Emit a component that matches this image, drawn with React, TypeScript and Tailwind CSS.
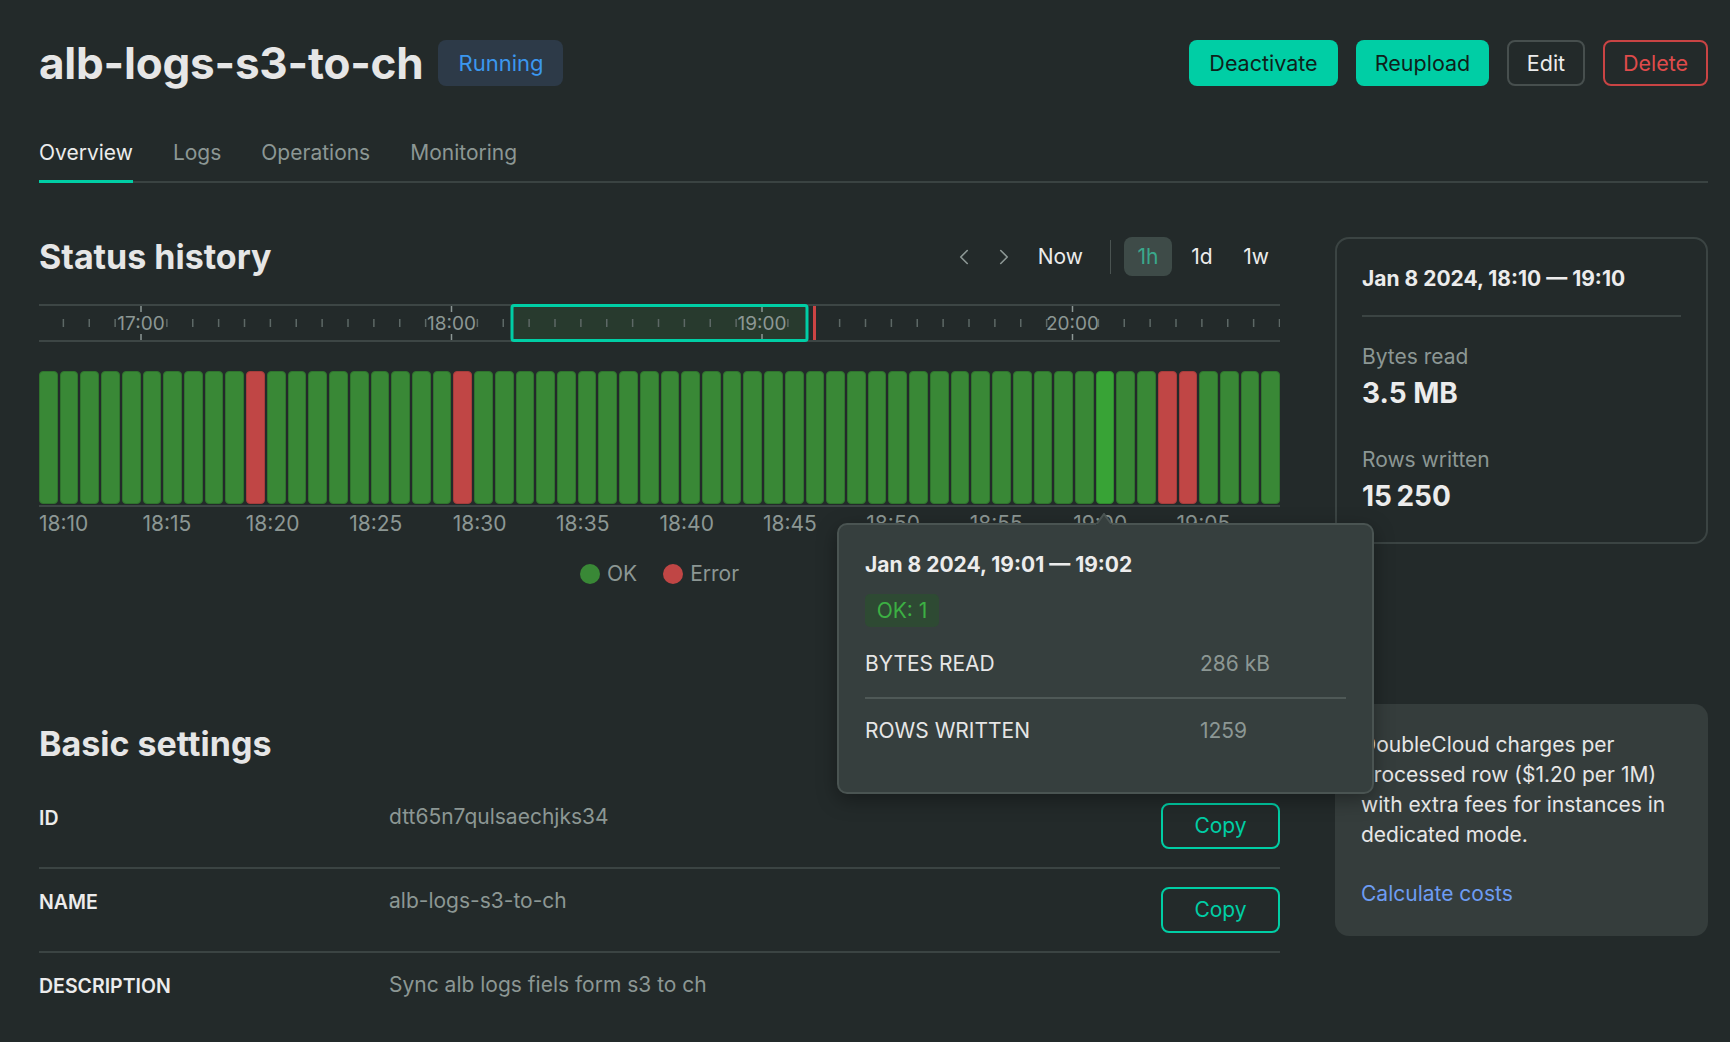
import { ChevronLeft, ChevronRight } from 'lucide-react';

const FONT = { fontFamily: 'Inter, "Noto Sans", sans-serif' };

type BarKind = 'ok' | 'error' | 'hover';

const bars: BarKind[] = Array.from({ length: 60 }, (_, i) => {
  if (i === 10 || i === 20 || i === 54 || i === 55) return 'error';
  if (i === 51) return 'hover';
  return 'ok';
});

const axisLabels = ['18:10', '18:15', '18:20', '18:25', '18:30', '18:35', '18:40', '18:45', '18:50', '18:55', '19:00', '19:05'];

const HOUR = 310.5;
const FIRST_HOUR_X = 102;

function Navigator() {
  const step = HOUR / 12;
  const ticks: { x: number; major: boolean; label?: string }[] = [];
  for (let k = -3; k < 48; k++) {
    const x = FIRST_HOUR_X + k * step;
    if (x < 0 || x > 1241) continue;
    const major = k % 12 === 0;
    ticks.push({ x, major, label: major ? `${17 + k / 12}:00` : undefined });
  }

  return (
    <svg width={1241} height={38} className="block">
      <rect x={473} y={1.5} width={295} height={35} rx={2} fill="#283a2e" />
      <line x1={0} y1={1} x2={1241} y2={1} stroke="#3d4645" strokeWidth={2} />
      <line x1={0} y1={37} x2={1241} y2={37} stroke="#3d4645" strokeWidth={2} />
      {ticks.map((t) =>
        t.major ? (
          <g key={t.x}>
            <line x1={t.x} y1={2} x2={t.x} y2={8} stroke="#8c9794" strokeWidth={1.5} />
            <line x1={t.x} y1={30} x2={t.x} y2={36} stroke="#8c9794" strokeWidth={1.5} />
            <text x={t.x} y={25.5} textAnchor="middle" fontSize={19} fill="#8c9794" style={FONT}>
              {t.label}
            </text>
          </g>
        ) : (
          <line key={t.x} x1={t.x} y1={15} x2={t.x} y2={23} stroke="#5d6866" strokeWidth={1.5} />
        ),
      )}
      <rect x={473} y={1.5} width={295} height={35} rx={2} fill="none" stroke="#00cea5" strokeWidth={3} />
      <rect x={774} y={2} width={3} height={34} fill="#cc4444" />
    </svg>
  );
}

function SettingRow({ label, value, copy, last }: { label: string; value: string; copy?: boolean; last?: boolean }) {
  return (
    <div className={`flex items-start h-[84px] ${last ? '' : 'border-b-2 border-[#3b4443]'}`}>
      <div className="w-[350px] pt-[21px] text-[19.5px] leading-6 font-semibold text-[#ececec]">{label}</div>
      <div className="pt-[20px] text-[21px] leading-6 text-[#8c9794]">{value}</div>
      {copy && (
        <button className="ml-auto mt-[18px] w-[119px] h-[46px] rounded-lg border-2 border-[#00cea5] text-[21px] text-[#00cea5]">
          Copy
        </button>
      )}
    </div>
  );
}

export default function App() {
  return (
    <div className="relative h-[1042px] overflow-hidden bg-[#232a2a] text-[#e8e8e8]" style={FONT}>
      <div className="pl-[39px] pr-[22px] pt-10">
        {/* header */}
        <div className="flex items-center h-[46px]">
          <h1 className="text-[44px] leading-[46px] font-bold text-[#e6e6e6] tracking-[-0.2px]">alb-logs-s3-to-ch</h1>
          <span className="ml-[15px] h-[46px] px-[20px] flex items-center rounded-lg bg-[#2d3a48] text-[22px] text-[#3b97ef]">
            Running
          </span>
          <div className="ml-auto flex items-center gap-[18px]">
            <button className="h-[46px] w-[149px] rounded-lg bg-[#00cea5] text-[21.5px] text-[#0f1f1b]">Deactivate</button>
            <button className="h-[46px] w-[133px] rounded-lg bg-[#00cea5] text-[21.5px] text-[#0f1f1b]">Reupload</button>
            <button className="h-[46px] w-[78px] rounded-lg border-2 border-[#474f4e] text-[21.5px] text-[#ececec]">Edit</button>
            <button className="h-[46px] w-[105px] rounded-lg border-2 border-[#c94444] text-[21.5px] text-[#df4b4b]">Delete</button>
          </div>
        </div>

        {/* tabs */}
        <div className="mt-[53px] flex gap-10 border-b-2 border-[#3a4342] text-[21px] leading-7">
          <div className="pb-[13px] border-b-[3px] border-[#00cea5] -mb-[2px] text-[#ececec]">Overview</div>
          <div className="pb-[13px] text-[#8c9794]">Logs</div>
          <div className="pb-[13px] text-[#8c9794]">Operations</div>
          <div className="pb-[13px] text-[#8c9794]">Monitoring</div>
        </div>

        <div className="mt-[54px] grid grid-cols-[1241px_373px] gap-x-[55px]">
          {/* left column */}
          <div>
            <div className="flex items-center h-[39px]">
              <h2 className="text-[34px] leading-[38px] font-bold text-[#e6e6e6]">Status history</h2>
              <div className="ml-auto flex items-center">
                <ChevronLeft size={26} strokeWidth={1.5} className="text-[#8c9794]" />
                <ChevronRight size={26} strokeWidth={1.5} className="ml-[14px] text-[#8c9794]" />
                <span className="ml-[21px] text-[21px] text-[#ececec]">Now</span>
                <span className="ml-[27px] w-px h-[34px] bg-[#4a5351]" />
                <span className="ml-[13px] w-[48px] h-[39px] rounded-lg bg-[#3e4b48] flex items-center justify-center text-[21px] text-[#3aa88c]">
                  1h
                </span>
                <span className="ml-[6px] w-[48px] h-[39px] flex items-center justify-center text-[21px] text-[#ececec]">1d</span>
                <span className="ml-[6px] w-[48px] h-[39px] flex items-center justify-center text-[21px] text-[#ececec]">1w</span>
              </div>
            </div>

            <div className="mt-[28px]">
              <Navigator />
            </div>

            <div className="mt-[29px] flex gap-[2px] h-[133px]">
              {bars.map((b, i) => (
                <div
                  key={i}
                  className={`flex-1 rounded-[4px] border ${
                    b === 'error'
                      ? 'bg-[#c04645] border-[#a63c3b]'
                      : b === 'hover'
                        ? 'bg-[#38a336] border-[#2f8a2d]'
                        : 'bg-[#398836] border-[#2f732d]'
                  }`}
                />
              ))}
            </div>
            <div className="mt-[1px] h-[2px] bg-[#3d4645]" />

            <div className="mt-[5px] grid grid-cols-12 text-[21px] leading-6 text-[#8c9794]">
              {axisLabels.map((l) => (
                <span key={l}>{l}</span>
              ))}
            </div>

            <div className="mt-[26px] flex justify-center items-center h-6 text-[21px] text-[#8c9794]">
              <span className="w-5 h-5 rounded-full bg-[#398836]" />
              <span className="ml-[7px]">OK</span>
              <span className="ml-[26px] w-5 h-5 rounded-full bg-[#c04645]" />
              <span className="ml-[7px]">Error</span>
            </div>

            <h2 className="mt-[139px] text-[34px] leading-[38px] font-bold text-[#e6e6e6]">Basic settings</h2>
            <div className="mt-[22px]">
              <SettingRow label="ID" value="dtt65n7qulsaechjks34" copy />
              <SettingRow label="NAME" value="alb-logs-s3-to-ch" copy />
              <SettingRow label="DESCRIPTION" value="Sync alb logs fiels form s3 to ch" last />
            </div>
          </div>

          {/* right column */}
          <div>
            <div className="h-[307px] rounded-[14px] border-2 border-[#3b4443] px-[25px] pt-[28px]">
              <div className="text-[21px] leading-6 font-bold text-[#ececec]">Jan 8 2024, 18:10 — 19:10</div>
              <div className="mt-[24px] h-[2px] bg-[#3b4443]" />
              <div className="mt-[28px] text-[21px] leading-6 text-[#8c9794]">Bytes read</div>
              <div className="mt-[7px] text-[28px] leading-[34px] font-bold text-[#ececec]">3.5 MB</div>
              <div className="mt-[38px] text-[21px] leading-6 text-[#8c9794]">Rows written</div>
              <div className="mt-[7px] text-[28px] leading-[34px] font-bold text-[#ececec]">15{'\u202F'}250</div>
            </div>

            <div className="mt-[160px] rounded-[14px] bg-[#353d3c] px-[26px] pt-[26px] pb-[27px]">
              <p className="text-[21px] leading-[30px] text-[#e6e6e6]">
                DoubleCloud charges per processed row ($1.20 per 1M) with extra fees for instances in dedicated mode.
              </p>
              <div className="mt-[29px] text-[21px] leading-[30px] text-[#6d9cf2]">Calculate costs</div>
            </div>
          </div>
        </div>
      </div>

      {/* tooltip */}
      <div className="absolute left-[837px] top-[523px] w-[537px] h-[271px] rounded-[10px] border-2 border-[#4a5452] bg-[#363f3e] px-[26px] pt-[28px] shadow-[0_6px_20px_rgba(0,0,0,0.35)]">
        <svg width={16} height={12} className="absolute -top-[12px] left-[257px]">
          <path d="M0 12 L8 1 L16 12" fill="#363f3e" stroke="#4a5452" strokeWidth={2} />
          <rect x={0} y={11} width={16} height={2} fill="#363f3e" />
        </svg>
        <div className="text-[21px] leading-6 font-bold text-[#ececec]">Jan 8 2024, 19:01 — 19:02</div>
        <div className="mt-[17px] w-[74px] h-[33px] rounded-[5px] bg-[#2e4a33] flex items-center justify-center text-[21px] text-[#3cb043]">
          OK: 1
        </div>
        <div className="mt-[25px] flex text-[21px] leading-6">
          <span className="w-[335px] text-[#e6e6e6]">BYTES READ</span>
          <span className="text-[#8c9794]">286 kB</span>
        </div>
        <div className="mt-[21px] h-[2px] bg-[#4f5957]" />
        <div className="mt-[20px] flex text-[21px] leading-6">
          <span className="w-[335px] text-[#e6e6e6]">ROWS WRITTEN</span>
          <span className="text-[#8c9794]">1259</span>
        </div>
      </div>
    </div>
  );
}
